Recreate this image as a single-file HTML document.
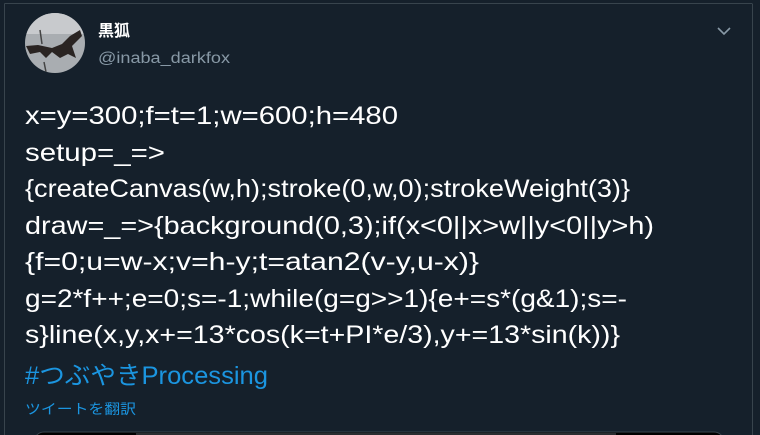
<!DOCTYPE html>
<html><head><meta charset="utf-8"><style>
html,body{margin:0;padding:0;width:760px;height:435px;overflow:hidden;background:#15202b;}
</style></head><body>
<svg width="760" height="435" xmlns="http://www.w3.org/2000/svg" style="display:block">
<rect width="760" height="435" fill="#15202b"/>
<line x1="4.5" y1="3.5" x2="752" y2="3.5" stroke="#38444d"/>
<line x1="4.5" y1="3.5" x2="4.5" y2="435" stroke="#38444d"/>
<line x1="752.5" y1="3.5" x2="752.5" y2="435" stroke="#38444d"/>
<defs><clipPath id="c"><circle cx="55" cy="43" r="30"/></clipPath></defs>
<g clip-path="url(#c)">
<rect x="24" y="12" width="62" height="62" fill="#a9adb1"/>
<rect x="24" y="12" width="62" height="22" fill="#c8cacd"/>
<path d="M26 46 L38 45 L52 48 L62 44 L70 36 L80 30 L82 36 L72 46 L76 58 L68 54 L60 58 L52 52 L46 58 L40 52 L30 54 Z" fill="#2a2422"/>
<path d="M40 30 L42 44 M44 62 L46 72" stroke="#444" stroke-width="1.5"/>
</g>
<text x="98" y="36" font-family="Liberation Sans, Noto Sans CJK JP, sans-serif" font-weight="bold" font-size="16" fill="#fff">黒狐</text>
<text x="98" y="63" font-family="Liberation Sans, sans-serif" font-size="15.5" fill="#8899a6" textLength="132" lengthAdjust="spacingAndGlyphs">@inaba_darkfox</text>
<path d="M718 28 L724 34 L730 28" stroke="#8899a6" stroke-width="1.6" fill="none"/>
<g font-family="Liberation Sans, sans-serif" font-size="25" fill="#fff">
<text x="25" y="124" textLength="373" lengthAdjust="spacingAndGlyphs">x=y=300;f=t=1;w=600;h=480</text>
<text x="25" y="161" textLength="140" lengthAdjust="spacingAndGlyphs">setup=_=&gt;</text>
<text x="25" y="197" textLength="605" lengthAdjust="spacingAndGlyphs">{createCanvas(w,h);stroke(0,w,0);strokeWeight(3)}</text>
<text x="25" y="234" textLength="629" lengthAdjust="spacingAndGlyphs">draw=_=&gt;{background(0,3);if(x&lt;0||x&gt;w||y&lt;0||y&gt;h)</text>
<text x="25" y="270" textLength="454" lengthAdjust="spacingAndGlyphs">{f=0;u=w-x;v=h-y;t=atan2(v-y,u-x)}</text>
<text x="25" y="307" textLength="602" lengthAdjust="spacingAndGlyphs">g=2*f++;e=0;s=-1;while(g=g&gt;&gt;1){e+=s*(g&amp;1);s=-</text>
<text x="25" y="343" textLength="595" lengthAdjust="spacingAndGlyphs">s}line(x,y,x+=13*cos(k=t+PI*e/3),y+=13*sin(k))}</text>
</g>
<text x="25" y="384" font-family="Liberation Sans, Noto Sans CJK JP, sans-serif" font-size="25" fill="#1b95e0" textLength="243" lengthAdjust="spacingAndGlyphs">#つぶやきProcessing</text>
<text x="25" y="414" font-family="Liberation Sans, Noto Sans CJK JP, sans-serif" font-size="14" fill="#1b95e0" textLength="111" lengthAdjust="spacingAndGlyphs">ツイートを翻訳</text>
<rect x="34" y="432" width="690" height="20" rx="10" fill="#000" stroke="#38444d"/>
<rect x="136" y="433" width="480" height="5" fill="#2a2d30"/>
</svg>
</body></html>
